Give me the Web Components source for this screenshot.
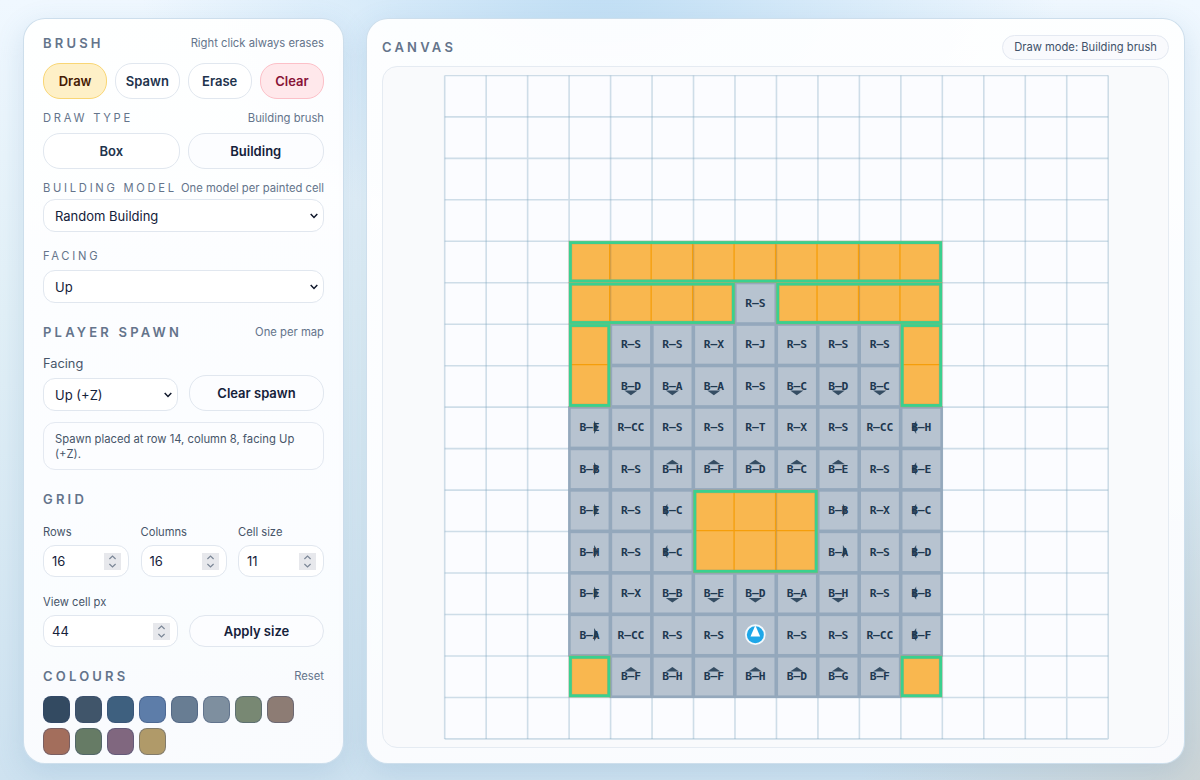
<!DOCTYPE html>
<html lang="en">
<head>
<meta charset="utf-8">
<title>Map editor</title>
<style>
  html, body { height: 100%; }
  body {
    margin: 0;
    overflow: hidden;
    font-family: Inter, "Liberation Sans", sans-serif;
    color: #14213a;
    background:
      radial-gradient(ellipse 460px 260px at 600px -20px, rgba(186, 219, 243, .9), rgba(186, 219, 243, 0)),
      radial-gradient(circle 340px at 100% 100%, rgba(204, 211, 212, .9), rgba(204, 211, 212, 0)),
      linear-gradient(180deg, #f0f8ff 0%, #e2f0f7 40%, #cee2f0 100%);
  }
</style>
</head>
<body>

<editor-layout>
  <glass-panel slot="side">
    <tool-sidebar></tool-sidebar>
  </glass-panel>
  <glass-panel slot="main">
    <canvas-view mode="Draw mode: Building brush">
      <map-board></map-board>
    </canvas-view>
  </glass-panel>
</editor-layout>

<script>
  class EditorLayout extends HTMLElement {
    constructor() {
      super();
      this.attachShadow({mode: 'open'});
      this.shadowRoot.innerHTML = `
        <style>
          :host {
            display: grid;
            grid-template-columns: 321px 819px;
            gap: 22px;
            box-sizing: border-box;
            height: 780px;
            padding: 18px 15px 16px 23px;
          }
          ::slotted(*) { min-width: 0; }
        </style>
        <slot name="side"></slot>
        <slot name="main"></slot>
      `;
    }
  }
  customElements.define('editor-layout', EditorLayout);

  class GlassPanel extends HTMLElement {
    constructor() {
      super();
      this.attachShadow({mode: 'open'});
      this.shadowRoot.innerHTML = `
        <style>
          :host {
            display: block;
            box-sizing: border-box;
            border: 1px solid rgba(190, 212, 230, .75);
            border-radius: 22px;
            background: linear-gradient(160deg, rgba(255, 255, 255, .93), rgba(252, 253, 255, .93));
            box-shadow: 0 8px 28px rgba(70, 125, 170, .17);
          }
        </style>
        <slot></slot>
      `;
    }
  }
  customElements.define('glass-panel', GlassPanel);

  // Title on the left, small hint on the right
  class SectionHead extends HTMLElement {
    constructor() {
      super();
      this.attachShadow({mode: 'open'});
      this.shadowRoot.innerHTML = `
        <style>
          :host {
            display: flex;
            justify-content: space-between;
            align-items: center;
            height: 18px;
            white-space: nowrap;
            color: #64748b;
          }
          .title { font-size: 13px; font-weight: 600; letter-spacing: 3.2px; }
          .hint { font-size: 11.25px; }
          :host([minor]) { height: 16px; }
          :host([minor]) .title { font-size: 11.2px; font-weight: 400; letter-spacing: 2.72px; }
        </style>
        <span class="title"><slot></slot></span>
        <span class="hint">${this.getAttribute('hint') || ''}</span>
      `;
    }
  }
  customElements.define('section-head', SectionHead);

  class PillButton extends HTMLElement {
    constructor() {
      super();
      this.attachShadow({mode: 'open'});
      this.shadowRoot.innerHTML = `
        <style>
          :host {
            display: flex;
            align-items: center;
            justify-content: center;
            box-sizing: border-box;
            height: 36px;
            border: 1px solid #e1e7ef;
            border-radius: 17px;
            background: #fff;
            color: #1e334d;
            font-size: 13px;
            font-weight: 600;
            white-space: nowrap;
          }
          :host([tone="amber"]) { background: #fef0c7; border-color: #f9d675; color: #451a03; }
          :host([tone="rose"]) { background: #ffe8eb; border-color: #fcc0c8; color: #881337; }
          :host([tone="plain"]) { background: #fcfdff; color: #14213a; }
          :host([short]) { height: 32px; border-radius: 16px; }
        </style>
        <slot></slot>
      `;
    }
  }
  customElements.define('pill-button', PillButton);

  class SelectBox extends HTMLElement {
    constructor() {
      super();
      this.attachShadow({mode: 'open'});
      this.shadowRoot.innerHTML = `
        <style>
          :host {
            display: flex;
            align-items: center;
            justify-content: space-between;
            box-sizing: border-box;
            height: 33px;
            padding: 0 5px 0 11px;
            border: 1px solid #e1e7ef;
            border-radius: 12px;
            background: #fff;
            font-size: 13px;
          }
          svg { display: block; }
        </style>
        <slot></slot>
        <svg width="8" height="6" viewBox="0 0 8 6" fill="none">
          <path d="M.7 1 4 4.4 7.3 1" stroke="#0f172a" stroke-width="1.5"/>
        </svg>
      `;
    }
  }
  customElements.define('select-box', SelectBox);

  class NumberField extends HTMLElement {
    constructor() {
      super();
      this.attachShadow({mode: 'open'});
      this.shadowRoot.innerHTML = `
        <style>
          :host { display: block; }
          .label { height: 16px; line-height: 16px; font-size: 11.2px; color: #475569; }
          .box {
            display: flex;
            align-items: center;
            justify-content: space-between;
            box-sizing: border-box;
            height: 32px;
            margin-top: 5px;
            padding: 0 7px 0 8px;
            border: 1px solid #e1e7ef;
            border-radius: 12px;
            background: #fff;
            font-size: 13px;
          }
          svg { display: block; background: #e7e8ec; }
        </style>
        <div class="label">${this.getAttribute('label')}</div>
        <div class="box">
          <slot></slot>
          <svg width="17" height="17" viewBox="0 0 17 17" fill="none" stroke="#7c8797" stroke-width="1.2">
            <path d="M5.4 6 8.5 3 11.6 6M5.4 11 8.5 14 11.6 11"/>
          </svg>
        </div>
      `;
    }
  }
  customElements.define('number-field', NumberField);

  class ColourSwatches extends HTMLElement {
    constructor() {
      super();
      this.attachShadow({mode: 'open'});
      const colours = [
        '#334a61', '#40556a', '#3e607f', '#5d7da9', '#687d93', '#7e8f9f', '#788873', '#8d7c74',
        '#a36e5c', '#667b65', '#80677f', '#b09a69',
      ];
      this.shadowRoot.innerHTML = `
        <style>
          :host { display: flex; flex-wrap: wrap; gap: 5px; }
          i {
            box-sizing: border-box;
            width: 27px;
            height: 27px;
            border: 1.5px solid rgba(50, 70, 110, .36);
            border-radius: 8px;
          }
        </style>
        ${colours.map(c => `<i style="background:${c}"></i>`).join('')}
      `;
    }
  }
  customElements.define('colour-swatches', ColourSwatches);

  class ToolSidebar extends HTMLElement {
    constructor() {
      super();
      this.attachShadow({mode: 'open'});
      this.shadowRoot.innerHTML = `
        <style>
          :host { display: block; padding: 15px 19px 0; }
          .row { display: grid; gap: 8px; }
          .four { grid-template-columns: repeat(4, 1fr); }
          .two { grid-template-columns: 1fr 1fr; }
          .wide { gap: 11px; align-items: end; }
          .three { grid-template-columns: repeat(3, 1fr); gap: 11.5px; }
          .label { height: 16px; line-height: 16px; margin-bottom: 6px; font-size: 12.8px; color: #475569; }
          .note {
            box-sizing: border-box;
            height: 48px;
            padding: 9px 11px 7px;
            border: 1px solid #e4e9f1;
            border-radius: 12px;
            background: #fcfdff;
            color: #475569;
            font-size: 11.25px;
            line-height: 15px;
          }
        </style>
        <section-head hint="Right click always erases">BRUSH</section-head>
        <div class="row four" style="margin-top:11px">
          <pill-button tone="amber">Draw</pill-button>
          <pill-button>Spawn</pill-button>
          <pill-button>Erase</pill-button>
          <pill-button tone="rose">Clear</pill-button>
        </div>
        <section-head minor hint="Building brush" style="margin-top:11px">DRAW TYPE</section-head>
        <div class="row two" style="margin-top:7px">
          <pill-button>Box</pill-button>
          <pill-button tone="plain">Building</pill-button>
        </div>
        <section-head minor hint="One model per painted cell" style="margin-top:11px">BUILDING MODEL</section-head>
        <select-box style="margin-top:3px">Random Building</select-box>
        <section-head minor style="margin-top:16px">FACING</section-head>
        <select-box style="margin-top:6px">Up</select-box>

        <section-head hint="One per map" style="margin-top:20px">PLAYER SPAWN</section-head>
        <div class="row two wide" style="margin-top:15px">
          <div>
            <div class="label">Facing</div>
            <select-box>Up (+Z)</select-box>
          </div>
          <pill-button tone="plain">Clear spawn</pill-button>
        </div>
        <div class="note" style="margin-top:11px">Spawn placed at row 14, column 8, facing Up (+Z).</div>

        <section-head style="margin-top:20px">GRID</section-head>
        <div class="row three" style="margin-top:16px">
          <number-field label="Rows">16</number-field>
          <number-field label="Columns">16</number-field>
          <number-field label="Cell size">11</number-field>
        </div>
        <div class="row two wide" style="margin-top:17px">
          <number-field label="View cell px">44</number-field>
          <pill-button tone="plain" short>Apply size</pill-button>
        </div>

        <section-head hint="Reset" style="margin-top:20px">COLOURS</section-head>
        <colour-swatches style="margin-top:11px"></colour-swatches>
      `;
    }
  }
  customElements.define('tool-sidebar', ToolSidebar);

  class CanvasView extends HTMLElement {
    constructor() {
      super();
      this.attachShadow({mode: 'open'});
      this.shadowRoot.innerHTML = `
        <style>
          :host { display: block; padding: 16px 15px 0; }
          header { display: flex; align-items: center; justify-content: space-between; height: 24px; }
          .title { font-size: 13px; font-weight: 600; letter-spacing: 3.2px; color: #64748b; }
          .mode {
            box-sizing: border-box;
            height: 25px;
            padding: 0 11px;
            border: 1px solid #e4e9f2;
            border-radius: 13px;
            background: #f9fafd;
            color: #41526a;
            font-size: 11.2px;
            line-height: 23px;
          }
          .stage {
            display: flex;
            justify-content: center;
            box-sizing: border-box;
            height: 682px;
            margin-top: 7px;
            padding-top: 8px;
            border: 1px solid #e5ebf2;
            border-radius: 15px;
            background: #f9fafc;
          }
        </style>
        <header>
          <span class="title">CANVAS</span>
          <span class="mode">${this.getAttribute('mode')}</span>
        </header>
        <div class="stage"><slot></slot></div>
      `;
    }
  }
  customElements.define('canvas-view', CanvasView);

  const CELL = 41.47;
  const COUNT = 16;
  const SIZE = CELL * COUNT;
  const FIRST_ROW = 4;
  const FIRST_COL = 3;

  // '#' box, 'P' player, otherwise a label with an optional facing (^ v < >)
  const MAP = [
    '# # # # # # # # #',
    '# # # # R–S # # # #',
    '# R–S R–S R–X R–J R–S R–S R–S #',
    '# B–Dv B–Av B–Av R–S B–Cv B–Dv B–Cv #',
    'B–E> R–CC R–S R–S R–T R–X R–S R–CC B–H<',
    'B–B> R–S B–H^ B–F^ B–D^ B–C^ B–E^ R–S B–E<',
    'B–E> R–S B–C< # # # B–B> R–X B–C<',
    'B–H> R–S B–C< # # # B–A> R–S B–D<',
    'B–E> R–X B–Bv B–Ev B–Dv B–Av B–Hv R–S B–B<',
    'B–A> R–CC R–S R–S P R–S R–S R–CC B–F<',
    '# B–F^ B–H^ B–F^ B–H^ B–D^ B–G^ B–F^ #',
  ];

  // Merged boxes: col, row, width, height in cells
  const BOXES = [
    [3, 4, 9, 1], [3, 5, 4, 1], [8, 5, 4, 1], [3, 6, 1, 2], [11, 6, 1, 2],
    [6, 10, 3, 2], [3, 14, 1, 1], [11, 14, 1, 1],
  ];

  const ARROWS = {
    '^': '-6.6,-4.6 0,-9 6.6,-4.6',
    'v': '-6.6,4.8 0,9.4 6.6,4.8',
    '<': '-5,-6.6 -9.4,0 -5,6.6',
    '>': '4.6,-6.6 9,0 4.6,6.6',
  };

  class MapBoard extends HTMLElement {
    constructor() {
      super();
      this.attachShadow({mode: 'open'});
      this.shadowRoot.innerHTML = `
        <style>
          :host { display: block; width: 666px; height: 665px; }
          svg { display: block; }
          .line { stroke: #7fa6c0; stroke-opacity: .36; stroke-width: 1.6; }
          .cell { fill: #b7c3d0; stroke: #94a8bc; stroke-width: 2.6; }
          .box { fill: #f9b74f; }
          .seam { stroke: #f59e0b; stroke-width: 1.3; }
          .shade { stroke: #bd9450; stroke-width: .8; }
          .rim { fill: none; stroke: #b79a5e; stroke-width: 3.6; stroke-opacity: .6; }
          .ring { fill: none; stroke: #3ad08f; stroke-width: 2.8; }
          .arrow { fill: #1e3850; fill-opacity: .85; }
          text {
            font: bold 11.3px "DejaVu Sans Mono", monospace;
            letter-spacing: -.12px;
            fill: #1e3850;
            text-anchor: middle;
          }
        </style>
        <svg width="666" height="665" viewBox="-1.7 -.4 666 665">
          <rect width="${SIZE}" height="${SIZE}" fill="#fbfcff"/>
          ${this.drawLines()}
          ${this.drawCells()}
          ${BOXES.map(b => this.drawBox(b)).join('')}
        </svg>
      `;
    }

    drawLines() {
      let out = '';
      for (let i = 0; i <= COUNT; i++) {
        const p = i * CELL;
        out += `<path class="line" d="M${p} 0V${SIZE}M0 ${p}H${SIZE}"/>`;
      }
      return out;
    }

    drawCells() {
      let rects = '';
      let marks = '';
      MAP.forEach((line, r) => {
        line.split(' ').forEach((token, c) => {
          if (token === '#') return;
          const x = (FIRST_COL + c) * CELL;
          const y = (FIRST_ROW + r) * CELL;
          rects += `<rect class="cell" x="${x + .3}" y="${y + .3}" width="${CELL - 1}" height="${CELL - 1}"/>`;
          marks += `<g transform="translate(${x + CELL / 2 - .4} ${y + CELL / 2 - .6})">${this.drawMark(token)}</g>`;
        });
      });
      return rects + marks;
    }

    drawMark(token) {
      if (token === 'P') {
        return `<circle r="9.4" fill="#1ea7e8" stroke="#f3f9fd" stroke-width="1.8"/>
                <path d="M0-9.4 4.8 1.8H-4.8Z" fill="#fff"/>`;
      }
      const arrow = ARROWS[token.slice(-1)];
      const label = arrow ? token.slice(0, -1) : token;
      return `<text y="4.1">${label}</text>` +
        (arrow ? `<polygon class="arrow" points="${arrow}"/>` : '');
    }

    drawBox([col, row, w, h]) {
      const x = col * CELL;
      const y = row * CELL;
      const edge = `x="${x + 1.3}" y="${y + 1.3}" width="${w * CELL - 3}" height="${h * CELL - 3}"`;
      let seams = '';
      let shades = '';
      for (let i = 1; i < w; i++) {
        const sx = x + i * CELL - .9;
        seams += `M${sx} ${y + 2}v${h * CELL - 4}`;
        if ((col + i) % 2 === 0) shades += `M${sx + 1.1} ${y + 3}v${h * CELL - 6}`;
      }
      for (let j = 1; j < h; j++) seams += `M${x + 2} ${y + j * CELL - 1}h${w * CELL - 4}`;
      return `
        <rect class="box" x="${x}" y="${y}" width="${w * CELL - .5}" height="${h * CELL - .5}"/>
        <path class="seam" d="${seams}"/>
        <path class="shade" d="${shades}"/>
        <rect class="rim" ${edge}/>
        <rect class="ring" ${edge}/>`;
    }
  }
  customElements.define('map-board', MapBoard);
</script>
</body>
</html>
